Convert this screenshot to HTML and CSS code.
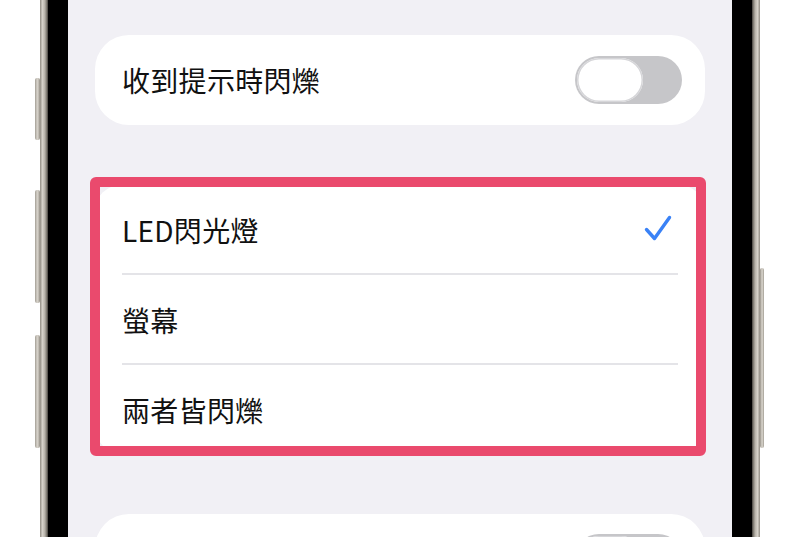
FILE: index.html
```html
<!DOCTYPE html>
<html lang="zh-Hant">
<head>
<meta charset="utf-8">
<title>閃爍設定</title>
<link rel="stylesheet" href="styles.css">
</head>
<body>
<div class="stage">
  <div class="side side-left">
    <span class="btn btn-action"></span>
    <span class="btn btn-vol-up"></span>
    <span class="btn btn-vol-down"></span>
  </div>
  <div class="rail rail-left"></div>
  <div class="bezel"></div>
  <main class="screen">
    <section class="card card-toggle">
      <span class="label">收到提示時閃爍</span>
      <span class="toggle"><span class="knob"></span></span>
    </section>

    <div class="option-wrap">
      <section class="card card-options">
        <div class="row">
          <span class="label">LED閃光燈</span>
          <svg class="check" width="28" height="28" viewBox="0 0 28 28" aria-hidden="true">
            <path d="M2.5 15.5 L10.5 24.5 L25.5 3.5" fill="none" stroke="#3a82f6" stroke-width="3.4" stroke-linecap="round" stroke-linejoin="round"/>
          </svg>
        </div>
        <div class="sep"></div>
        <div class="row"><span class="label">螢幕</span></div>
        <div class="sep"></div>
        <div class="row"><span class="label">兩者皆閃爍</span></div>
      </section>
      <div class="highlight"></div>
    </div>

    <section class="card card-toggle card-peek">
      <span class="label"></span>
      <span class="toggle"><span class="knob"></span></span>
    </section>
  </main>
  <div class="bezel"></div>
  <div class="rail rail-right"></div>
  <div class="side side-right">
    <span class="btn btn-power"></span>
  </div>
</div>
</body>
</html>
```
FILE: styles.css
```css
* { box-sizing: border-box; }
html, body {
  margin: 0;
  padding: 0;
  background: #ffffff;
  overflow: hidden;
}
body {
  font-family: "Noto Sans CJK TC", "Noto Sans", "Liberation Sans", sans-serif;
}
.stage {
  display: flex;
  width: 800px;
  height: 537px;
  overflow: hidden;
}
.side {
  display: flex;
  flex-direction: column;
}
.side-left {
  width: 40px;
  align-items: flex-end;
}
.side-right {
  width: 40px;
  align-items: flex-start;
}
.btn {
  display: block;
  width: 5px;
  border-radius: 2px;
  background: linear-gradient(to right, #a29d94, #d8d4cc 45%, #b9b4ab 80%, #8e8980);
}
.btn-action { margin-top: 78px; height: 62px; }
.btn-vol-up { margin-top: 50px; height: 113px; }
.btn-vol-down { margin-top: 32px; height: 113px; }
.btn-power {
  width: 4px;
  margin-top: 268px;
  height: 180px;
  background: linear-gradient(to left, #a29d94, #d8d4cc 45%, #b9b4ab 80%, #8e8980);
}
.rail {
  width: 8px;
}
.rail-left {
  background: linear-gradient(to right, #8f8a81, #d6d2ca 30%, #b8b3aa 60%, #6d6961 90%, #3a3835);
}
.rail-right {
  background: linear-gradient(to left, #8f8a81, #d6d2ca 30%, #b8b3aa 60%, #6d6961 90%, #3a3835);
}
.bezel {
  width: 20px;
  background: #000;
}
.screen {
  flex: 1;
  background: #f1f0f5;
  padding: 35px 27px 0;
  display: flex;
  flex-direction: column;
}
.card {
  background: #ffffff;
  width: 610px;
}
.card-toggle {
  height: 90px;
  border-radius: 34px;
  display: flex;
  align-items: center;
  justify-content: space-between;
  padding: 0 23px 0 27px;
  flex-shrink: 0;
}
.label {
  font-size: 28px;
  color: #111111;
  line-height: 1;
  letter-spacing: 0.3px;
}
.toggle {
  width: 107px;
  height: 48px;
  border-radius: 24px;
  background: #c6c6c9;
  padding: 2px;
  display: flex;
}
.knob {
  width: 66px;
  height: 44px;
  border-radius: 22px;
  background: #ffffff;
  box-shadow: 0 0 0 1.5px #d6d6d9 inset;
}
.option-wrap {
  position: relative;
  margin-top: 60px;
  flex-shrink: 0;
}
.card-options {
  border-radius: 26px;
  padding: 0 27px;
}
.row {
  height: 88px;
  display: flex;
  align-items: center;
  justify-content: space-between;
  padding-right: 6px;
}
.row .label { padding-top: 2px; }
.sep {
  height: 2px;
  background: #e4e4e8;
}
.check { display: block; margin-top: -2px; }
.highlight {
  position: absolute;
  left: -5px;
  right: -1px;
  top: -8px;
  bottom: -3px;
  border: 10px solid #ea4a6d;
  border-radius: 6px;
}
.card-peek {
  margin-top: 61px;
  align-items: flex-start;
  padding-top: 20px;
}
```
